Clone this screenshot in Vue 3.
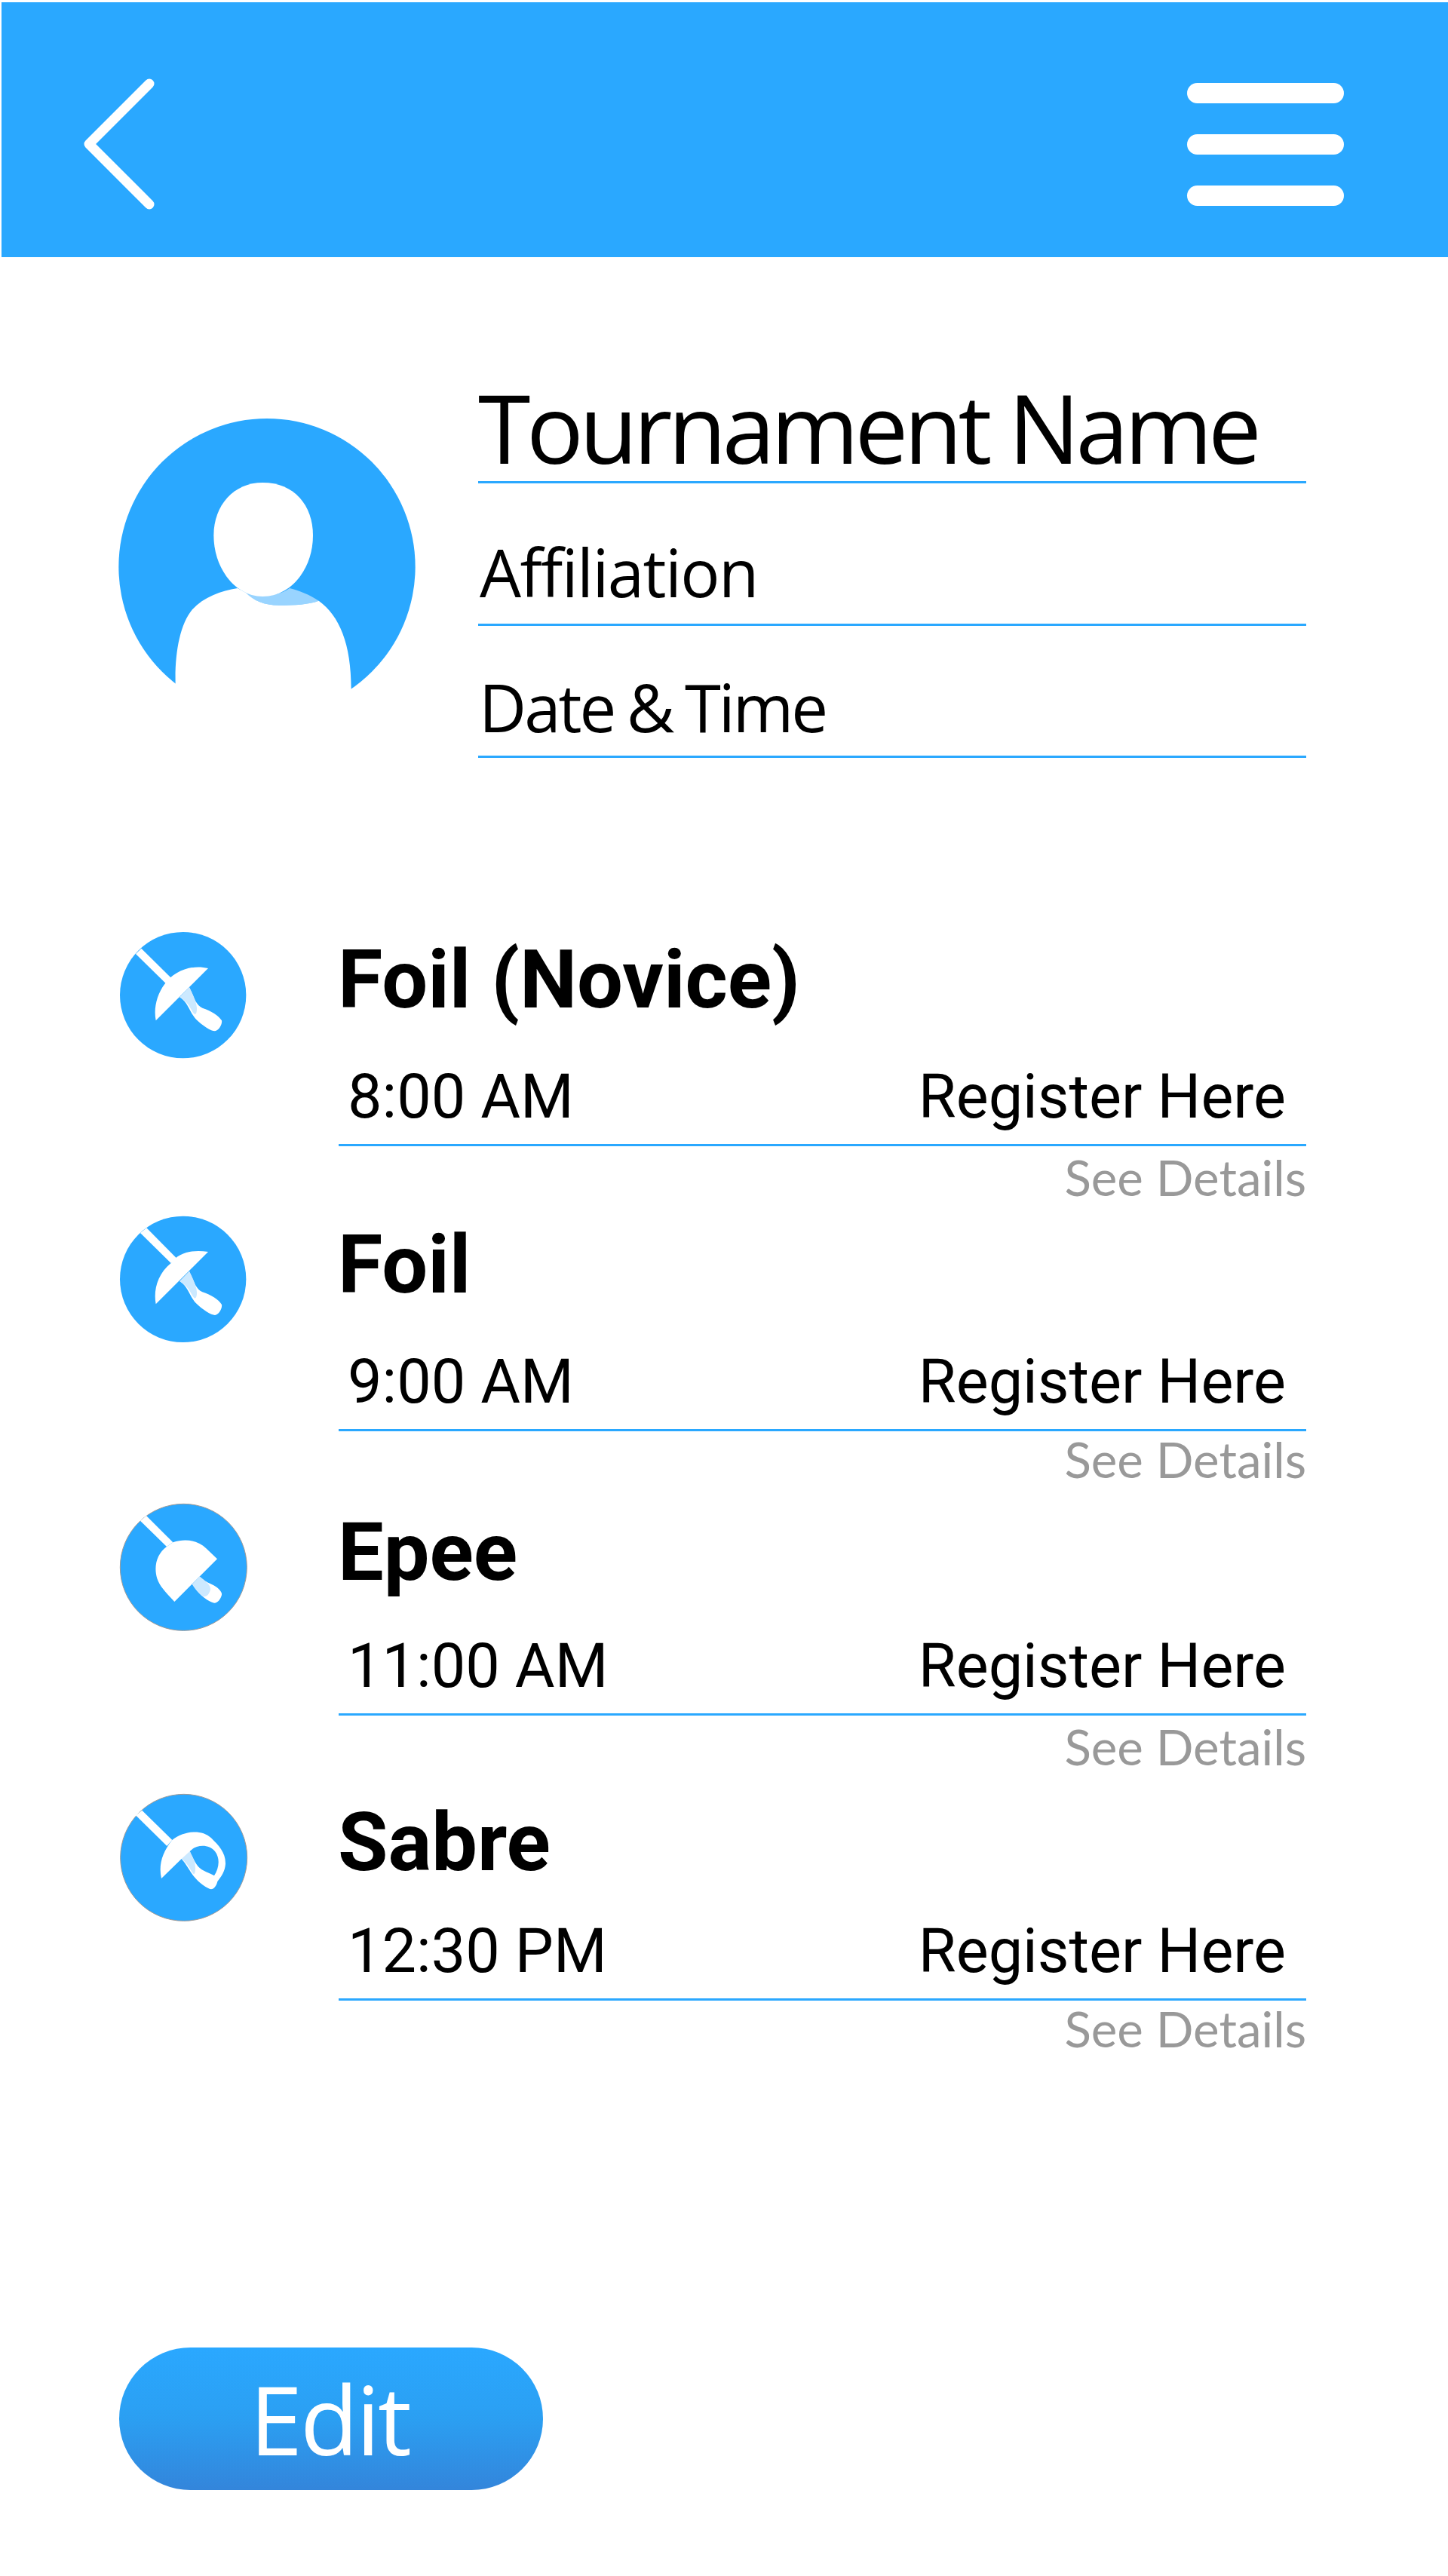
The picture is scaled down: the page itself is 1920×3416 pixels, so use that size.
<script setup>
const events = [
  { id: 'foil-novice', title: 'Foil (Novice)', time: '8:00 AM', icon: 'foil', iconTop: 52, titleTop: 81, detailsTop: 6 },
  { id: 'foil', title: 'Foil', time: '9:00 AM', icon: 'foil2', iconTop: 54, titleTop: 81, detailsTop: 2 },
  { id: 'epee', title: 'Epee', time: '11:00 AM', icon: 'epee', iconTop: 57, titleTop: 85, detailsTop: 6 },
  { id: 'sabre', title: 'Sabre', time: '12:30 PM', icon: 'sabre', iconTop: 69, titleTop: 92, detailsTop: 2 }
]
</script>

<template>
  <div class="page">
    <header class="topbar">
      <svg class="back" viewBox="0 0 110 190" aria-label="Back">
        <polyline points="92,15 12,95 92,175" fill="none" stroke="#fff" stroke-width="13" stroke-linecap="round" stroke-linejoin="round" />
      </svg>
      <div class="burger" aria-label="Menu">
        <span></span><span></span><span></span>
      </div>
    </header>

    <section class="profile">
      <svg class="avatar" viewBox="0 0 1380 1380">
        <circle cx="672" cy="755" r="590" fill="#2aa8ff" />
        <path d="M588,858C620,890 660,908 720,908C780,908 840,905 878,890C840,865 800,850 762,840C720,870 650,880 588,858Z" fill="#99d4ff" />
        <path d="M308,1220C305,1100 325,985 375,925C420,875 490,850 555,840L588,858C620,890 660,908 720,908C780,908 840,905 878,890C960,950 1007,1060 1007,1242L1007,1380L308,1380Z" fill="#fff" />
        <path d="M655,420C780,420 855,510 855,630C855,760 770,873 655,873C545,873 460,760 460,630C460,510 540,420 655,420Z" fill="#fff" />
      </svg>
      <div class="fields">
        <div class="field field-name">Tournament Name</div>
        <div class="field field-aff">Affiliation</div>
        <div class="field field-date">Date &amp; Time</div>
      </div>
    </section>

    <section class="events">
      <article v-for="e in events" :key="e.id" class="event">
        <div class="icon-col" :style="{ paddingTop: e.iconTop + 'px' }">
          <svg class="weapon" viewBox="0 0 660 660">
            <template v-if="e.icon === 'foil'">
              <circle cx="308" cy="329" r="251" fill="#2aa8ff" />
              <polygon points="120,165 142,143 262,262 240,283" fill="#fff" />
              <path d="M408,222C340,205 270,235 235,285C205,325 190,380 200,430Z" fill="#fff" />
              <path d="M333,298C350,330 355,365 385,380C420,392 450,410 462,430C465,445 450,470 435,472C420,472 385,450 360,425C335,400 330,360 295,337Z" fill="#fff" />
              <path d="M333,298C350,330 368,370 362,395C358,412 350,405 340,385C330,365 315,350 295,337Z" fill="#cce9ff" />
            </template>
            <template v-else-if="e.icon === 'foil2'">
              <circle cx="308" cy="319" r="251" fill="#2aa8ff" />
              <polygon points="138,135 163,115 283,236 260,255" fill="#fff" />
              <path d="M408,210C340,200 290,215 260,255C205,300 190,365 200,418Z" fill="#fff" />
              <path d="M333,288C350,320 355,355 385,370C420,382 450,400 462,420C465,435 450,460 435,462C420,462 385,440 360,415C335,390 330,350 295,327Z" fill="#fff" />
              <path d="M333,288C350,320 368,360 362,385C358,402 350,395 340,375C330,355 315,340 295,327Z" fill="#cce9ff" />
            </template>
            <template v-else-if="e.icon === 'epee'">
              <circle cx="310" cy="325" r="252" fill="#2aa8ff" stroke="#a09a96" stroke-width="3" />
              <polygon points="138,140 162,120 268,226 243,243" fill="#fff" />
              <path d="M444,292L400,250C370,220 320,208 268,226L243,243C205,270 190,320 205,370C215,400 235,420 274,462Z" fill="#fff" />
              <path d="M375,362C385,378 410,385 430,397C450,408 465,425 462,435C458,452 445,468 432,467C410,462 375,440 345,393Z" fill="#fff" />
              <path d="M375,362C395,378 420,395 417,415C410,440 395,445 385,440C370,428 355,410 345,393Z" fill="#cce9ff" />
            </template>
            <template v-else>
              <circle cx="311" cy="310" r="252" fill="#2aa8ff" stroke="#a09a96" stroke-width="3" />
              <polygon points="120,142 145,122 265,240 244,264" fill="#fff" />
              <path fill-rule="evenodd" d="M222,393C210,340 225,290 265,240C310,205 380,195 420,232C450,262 478,290 477,335C475,365 460,385 445,405C440,425 430,438 415,435C390,425 360,400 340,370C325,345 315,330 302,315ZM335,285C360,258 410,255 435,285C458,315 450,355 432,382C415,370 385,365 368,345C355,330 345,305 335,285Z" fill="#fff" />
              <path d="M335,285L302,315C325,330 340,365 350,375C358,378 358,350 355,330C350,315 342,300 335,285Z" fill="#cce9ff" />
            </template>
          </svg>
        </div>
        <div class="event-main">
          <div class="event-title-wrap" :style="{ paddingTop: e.titleTop + 'px' }">
            <h2 class="event-title">{{ e.title }}</h2>
          </div>
          <div class="event-line">
            <span>{{ e.time }}</span>
            <span>Register Here</span>
          </div>
          <div class="details" :style="{ marginTop: e.detailsTop + 'px' }">See Details</div>
        </div>
      </article>
    </section>

    <button class="edit">Edit</button>
  </div>
</template>

<style scoped>
.page {
  width: 1920px;
  height: 3416px;
  background: #fff;
  display: flex;
  flex-direction: column;
  overflow: hidden;
}
.topbar {
  margin: 3px 0 0 2px;
  height: 338px;
  box-sizing: border-box;
  padding: 38px 138px 0 104px;
  background: #2aa8ff;
  display: flex;
  align-items: center;
  justify-content: space-between;
  flex: none;
}
.back {
  width: 110px;
  height: 190px;
  display: block;
}
.burger {
  display: flex;
  flex-direction: column;
  gap: 41px;
}
.burger span {
  display: block;
  width: 208px;
  height: 27px;
  border-radius: 14px;
  background: #fff;
}
.profile {
  display: flex;
  flex: none;
  padding: 159px 0 0 130px;
}
.avatar {
  width: 460px;
  height: 460px;
  flex: none;
  display: block;
}
.fields {
  margin-left: 44px;
  width: 1098px;
}
.field {
  box-sizing: border-box;
  border-bottom: 3px solid #2aa8ff;
  font-family: "Open Sans", sans-serif;
  color: #000;
  display: flex;
  align-items: flex-end;
}
.field-name {
  height: 141px;
  font-size: 126px;
  line-height: 144px;
  letter-spacing: -5.5px;
}
.field-aff {
  height: 189px;
  font-size: 87px;
  line-height: 110px;
  letter-spacing: -1.6px;
  padding: 0 0 14px 2px;
}
.field-date {
  height: 175px;
  font-size: 87px;
  line-height: 110px;
  letter-spacing: -3px;
  word-spacing: -3px;
  padding: 0 0 10px 1px;
}
.events {
  margin-top: 153px;
  flex: none;
}
.event {
  display: flex;
  height: 377.67px;
}
.icon-col {
  width: 449px;
  box-sizing: border-box;
  padding-left: 140px;
  flex: none;
}
.weapon {
  width: 220px;
  height: 220px;
  display: block;
}
.event-main {
  width: 1283px;
}
.event-title-wrap {
  height: 247px;
  box-sizing: border-box;
}
.event-title {
  margin: 0 0 0 -1px;
  font: 700 108px/120px Roboto, sans-serif;
  color: #000;
}
.event-line {
  box-sizing: border-box;
  height: 115px;
  border-bottom: 3px solid #2aa8ff;
  padding: 0 27px 0 12px;
  display: flex;
  justify-content: space-between;
  font: 400 81px/100px Roboto, sans-serif;
  color: #000;
}
.details {
  text-align: right;
  font: 400 65.5px/70px Lato, sans-serif;
  color: #999;
}
.edit {
  margin: auto 0 114px 158px;
  width: 562px;
  height: 189px;
  border: 0;
  padding: 0 4px 0 0;
  flex: none;
  border-radius: 95px;
  background: linear-gradient(#2aa8ff 0%, #2b9ff2 50%, #3385db 100%);
  color: #fff;
  font: 400 126px/189px "Open Sans", sans-serif;
  letter-spacing: -3px;
  text-align: center;
}
</style>
